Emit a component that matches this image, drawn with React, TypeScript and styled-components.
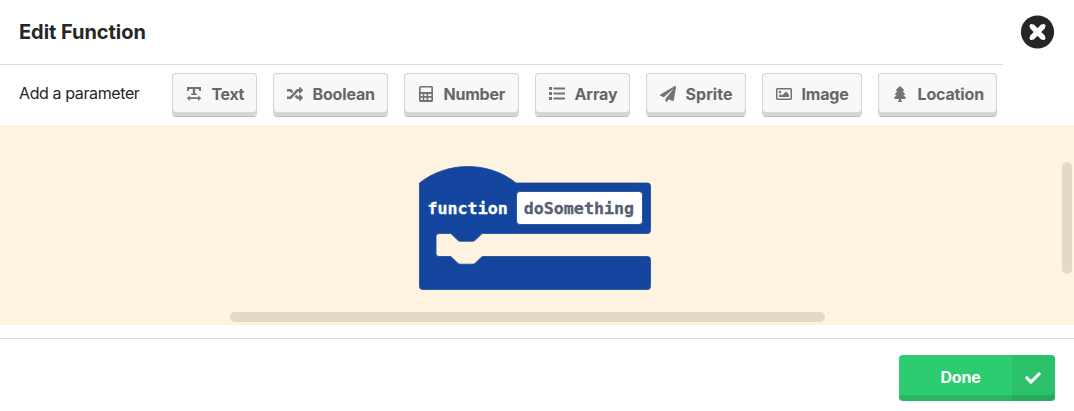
import React from "react";
import styled, { createGlobalStyle } from "styled-components";
import { FaRandom, FaPaperPlane, FaTree, FaRegImage, FaCheck } from "react-icons/fa";

const GlobalStyle = createGlobalStyle`
  * { box-sizing: border-box; }
  body { margin: 0; background: #fff; font-family: Inter, "Liberation Sans", sans-serif; }
`;

const Modal = styled.main`
  display: flex;
  flex-direction: column;
  width: 1074px;
  height: 411px;
  overflow: hidden;
  background: #fff;
`;

const Header = styled.header`
  display: flex;
  height: 65px;
`;

const Title = styled.h1`
  width: 1003px;
  height: 65px;
  margin: 0;
  padding-left: 19px;
  border-bottom: 1px solid #dbdbdb;
  color: #262626;
  font-size: 20px;
  font-weight: 700;
  line-height: 64px;
  letter-spacing: -0.05px;
`;

const CloseButton = styled.button`
  display: block;
  width: 33px;
  height: 34px;
  margin: 15px 0 0 18px;
  padding: 0;
  border: 0;
  background: none;
  svg { display: block; }
`;

const ParameterBar = styled.section`
  display: flex;
  height: 60px;
  padding: 8px 0 0 19px;
`;

const BarLabel = styled.span`
  width: 153px;
  color: #262626;
  font-size: 16px;
  line-height: 41px;
  letter-spacing: -0.39px;
`;

const ParameterList = styled.div`
  display: flex;
  gap: 16px;
`;

const ParameterButton = styled.button<{ $width: number; $spacing: number }>`
  display: flex;
  align-items: center;
  width: ${(p) => p.$width}px;
  height: 44px;
  padding: 0 0 2px 13px;
  border: 1px solid #d4d4d4;
  border-bottom-color: #bdbdbd;
  border-radius: 4px;
  background: #f8f8f8;
  box-shadow: inset 0 -4px 0 #d5d5d5;
  color: #666;
  font: 700 16px Inter, "Liberation Sans", sans-serif;
  letter-spacing: ${(p) => p.$spacing}px;
  white-space: nowrap;
`;

const IconSlot = styled.span`
  display: flex;
  justify-content: center;
  flex: none;
  width: 16px;
  margin-right: 9.5px;
  color: #737373;
`;

const Workspace = styled.section`
  display: flex;
  position: relative;
  height: 200px;
  padding: 41px 0 0 419px;
  background: #fef2e0;
`;

const Block = styled.div`
  position: relative;
  width: 232px;
  height: 124px;
`;

const BlockShape = styled.svg`
  position: absolute;
  inset: 0;
  overflow: visible;
`;

const BlockLabel = styled.div`
  display: flex;
  align-items: center;
  position: relative;
  padding: 25px 0 0 8.5px;
  color: #fff;
  font: 700 16.67px "DejaVu Sans Mono", "Liberation Mono", monospace;
  -webkit-text-stroke: 0.3px currentColor;
`;

const NameField = styled.span`
  width: 127px;
  height: 34px;
  margin-left: 8px;
  padding-left: 7px;
  border: 1px solid #2b58a8;
  border-radius: 4px;
  background: #fff;
  color: #575e75;
  line-height: 33px;
`;

const Scrollbar = styled.div<{ $vertical?: boolean }>`
  position: absolute;
  left: ${(p) => (p.$vertical ? 1062 : 230)}px;
  top: ${(p) => (p.$vertical ? 36.5 : 187)}px;
  width: ${(p) => (p.$vertical ? 10 : 595)}px;
  height: ${(p) => (p.$vertical ? 112 : 10)}px;
  border-radius: 5px;
  background: #e4d9c7;
`;

const Footer = styled.footer`
  display: flex;
  justify-content: flex-end;
  height: 73px;
  margin-top: 13px;
  padding: 16px 19px 0 0;
  border-top: 1px solid #dcdcdc;
`;

const DoneButton = styled.button`
  display: flex;
  width: 156px;
  height: 46px;
  padding: 0;
  border: 0;
  border-radius: 4px;
  overflow: hidden;
  background: linear-gradient(#2ecc71 0 40px, #2bb464 40px);
  color: #fff;
  font: 700 16px Inter, "Liberation Sans", sans-serif;
  letter-spacing: -0.2px;
`;

const DoneText = styled.span`
  flex: 1;
  padding-left: 10px;
  line-height: 45px;
`;

const DoneIcon = styled.span`
  display: flex;
  justify-content: center;
  align-items: center;
  width: 43px;
  height: 46px;
  padding-right: 1px;
  background: rgba(0, 0, 0, 0.05);
  color: #eefaf3;
`;

const TextWidthIcon = () => (
  <svg width="16" height="16" viewBox="0 0 16 16" fill="currentColor">
    <path d="M1 1h14v4h-1.800L12.700 3H9.200v4.600h1.600v1.500h-5.600V7.600h1.600V3H3.300l-.5 2H1zM.8 12.200l3-2.800v1.900h8.400V9.400l3 2.800-3 2.800v-1.900H3.800v1.900z" />
  </svg>
);

const CalculatorIcon = () => (
  <svg width="16" height="16" viewBox="0 0 16 16" fill="currentColor" fillRule="evenodd">
    <path d="M2.500 0h11A1.500 1.500 0 0 1 15 1.500v13a1.500 1.500 0 0 1-1.500 1.500h-11A1.500 1.500 0 0 1 1 14.500v-13A1.500 1.500 0 0 1 2.500 0zM2.700 1.600v4.400h10.600V1.600zM2.700 8v1.900h2V8zM6.300 8v1.900h2.200V8zM10.200 8v1.900h3.100V8zM2.700 11.800v2.300h2v-2.300zM6.300 11.800v2.300h2.200v-2.300zM10.200 11.800v2.300h3.100v-2.300z" />
  </svg>
);

const ListIcon = () => (
  <svg width="16" height="14" viewBox="0 0 16 14" fill="currentColor">
    <path d="M0 0h3v3H0zM0 5h3v3H0zM0 10h3v3H0zM4.500 .5H16v2H4.500zM4.500 5.500H16v2H4.500zM4.500 10.500H16v2H4.500z" />
  </svg>
);

const parameters = [
  { label: "Text", width: 85, spacing: -0.35, icon: <TextWidthIcon /> },
  { label: "Boolean", width: 115, spacing: -0.15, icon: <FaRandom size={16} /> },
  { label: "Number", width: 115, spacing: -0.22, icon: <CalculatorIcon /> },
  { label: "Array", width: 95, spacing: -0.1, icon: <ListIcon /> },
  { label: "Sprite", width: 100, spacing: 0.05, icon: <FaPaperPlane size={16} /> },
  { label: "Image", width: 100, spacing: -0.2, icon: <FaRegImage size={16} /> },
  { label: "Location", width: 119, spacing: -0.15, icon: <FaTree size={16} /> },
];

export default function App() {
  return (
    <Modal>
      <GlobalStyle />
      <Header>
        <Title>Edit Function</Title>
        <CloseButton aria-label="Close">
          <svg width="33" height="34" viewBox="0 0 33 34">
            <circle cx="16.500" cy="17" r="16.600" fill="#262626" />
            <path d="M10.700 11.200l11.600 11.600m0-11.600l-11.600 11.600" stroke="#fff" strokeWidth="5.400" />
            <path d="M10.500 11l12 12m0-12l-12 12" stroke="#fff" strokeWidth="4" strokeLinecap="round" />
          </svg>
        </CloseButton>
      </Header>
      <ParameterBar>
        <BarLabel>Add a parameter</BarLabel>
        <ParameterList>
          {parameters.map((p) => (
            <ParameterButton key={p.label} $width={p.width} $spacing={p.spacing}>
              <IconSlot>{p.icon}</IconSlot>
              {p.label}
            </ParameterButton>
          ))}
        </ParameterList>
      </ParameterBar>
      <Workspace>
        <Block>
          <BlockShape width="232" height="124" viewBox="0 0 232 124">
            <path
              d="M.5 17C28-5 70-5 97 17H228.500a3 3 0 0 1 3 3V64.500a3 3 0 0 1-3 3H64c-1 0-1.500.5-2.200 1.200L57 73.500q-1.500 1.700-3 1.700H41q-1.500 0-3-1.700l-4.800-4.800C32.500 68 32 67.500 31 67.500H20a3 3 0 0 0-3 3V87.500a3 3 0 0 0 3 3H31c1 0 1.500.5 2.200 1.200L38 96.500q1.500 1.700 3 1.700H54q1.500 0 3-1.700l4.800-4.800C62.500 91 63 90.500 64 90.500H228.500a3 3 0 0 1 3 3V120.500a3 3 0 0 1-3 3H3.500a3 3 0 0 1-3-3z"
              fill="#1446a0"
              stroke="#1c4690"
              strokeWidth=".8"
            />
          </BlockShape>
          <BlockLabel>
            function
            <NameField>doSomething</NameField>
          </BlockLabel>
        </Block>
        <Scrollbar />
        <Scrollbar $vertical />
      </Workspace>
      <Footer>
        <DoneButton>
          <DoneText>Done</DoneText>
          <DoneIcon>
            <FaCheck size={16} />
          </DoneIcon>
        </DoneButton>
      </Footer>
    </Modal>
  );
}
